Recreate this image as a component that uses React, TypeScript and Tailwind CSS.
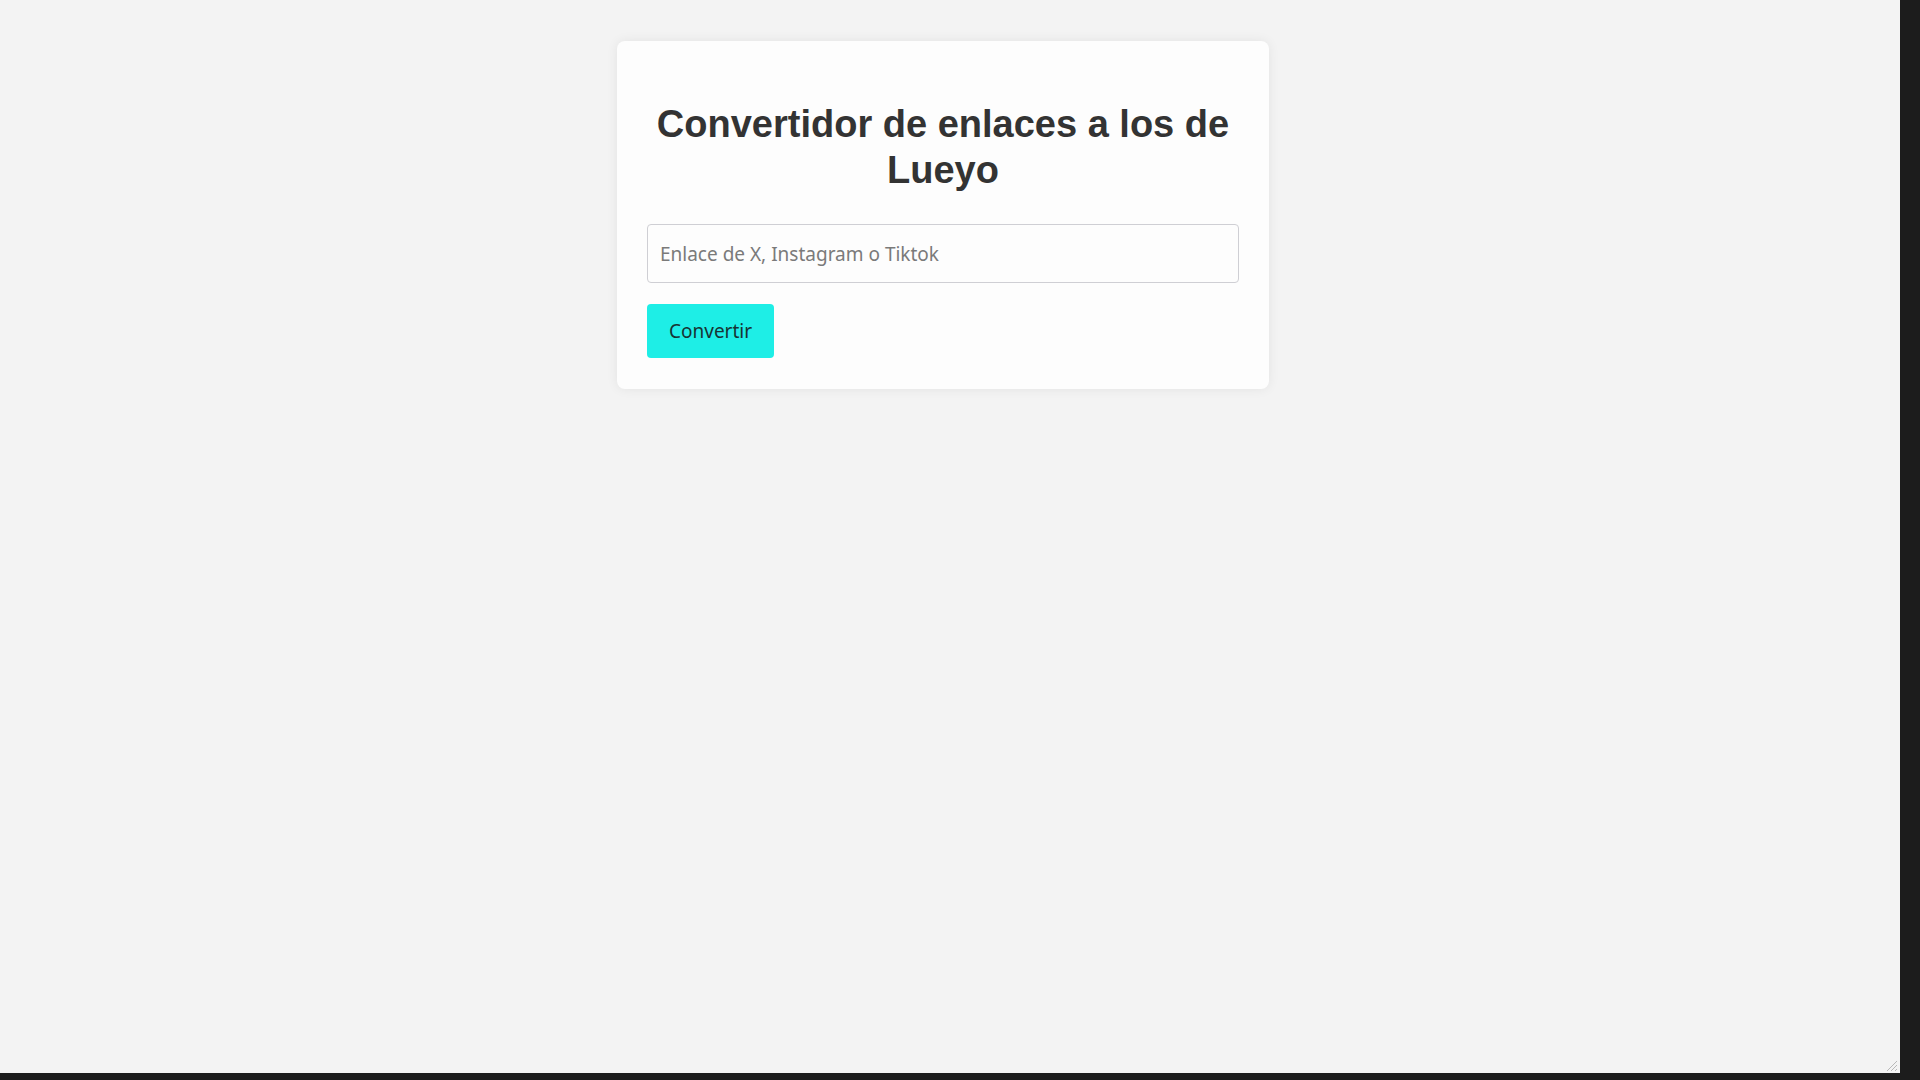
import React from "react";

export default function App() {
  return (
    <div className="flex h-screen w-full flex-col overflow-hidden bg-[#1c1c1c]">
      <div className="flex min-h-0 flex-1">
        <div className="relative flex flex-1 justify-center bg-[#f3f3f3] pr-[14px] pt-[41px]">
          <div className="flex h-fit w-[652px] flex-col items-stretch rounded-[8px] bg-[#fdfdfd] px-[30px] pt-[30px] pb-[31px] shadow-[0_0_12px_rgba(0,0,0,0.07)]">
            <h1
              className="mt-[30px] mb-[31px] text-center text-[38px] leading-[46px] font-bold text-[#333333]"
              style={{ fontFamily: '"Liberation Sans", Arial, sans-serif' }}
            >
              Convertidor de enlaces a los de Lueyo
            </h1>
            <input
              type="text"
              placeholder="Enlace de X, Instagram o Tiktok"
              className="h-[59px] w-full rounded-[4px] border border-[#cfcfd4] bg-[#fdfdfd] px-[12px] text-[19px] text-[#333] placeholder:text-[#7a7a7a] outline-none"
              style={{ fontFamily: '"Noto Sans", sans-serif' }}
            />
            <div className="mt-[21px] flex">
              <button
                className="h-[54px] rounded-[4px] bg-[#1eeee6] px-[22px] text-[19px] text-[#173434]"
                style={{ fontFamily: '"Noto Sans", sans-serif' }}
              >
                Convertir
              </button>
            </div>
          </div>
          <svg
            className="absolute right-[2px] bottom-[1px]"
            width="14"
            height="14"
            viewBox="0 0 14 14"
          >
            <line x1="13" y1="3" x2="3" y2="13" stroke="#b8b8b8" strokeWidth="1" />
            <line x1="13" y1="7" x2="7" y2="13" stroke="#b8b8b8" strokeWidth="1" />
            <line x1="13" y1="11" x2="11" y2="13" stroke="#b8b8b8" strokeWidth="1" />
          </svg>
        </div>
        <div className="w-[20px] bg-[#1c1c1c]" />
      </div>
      <div className="h-[7px] bg-[#1c1c1c]" />
    </div>
  );
}
